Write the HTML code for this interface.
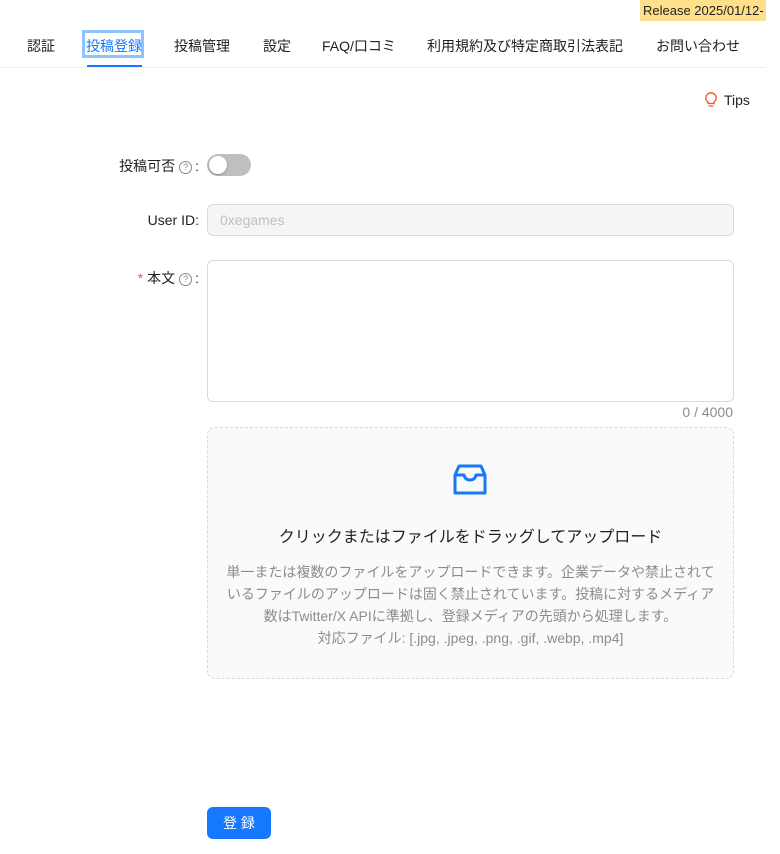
<!DOCTYPE html>
<html><head><meta charset="utf-8"><style>
body{margin:0;width:780px;height:854px;background:#fff;font-family:"Liberation Sans","Noto Sans CJK JP",sans-serif;color:#1f1f1f;position:relative;overflow:hidden}
.a{position:absolute;white-space:nowrap}
.tab{position:absolute;top:36px;font-size:14px;color:#1f1f1f}
.q{display:inline-block;width:11px;height:11px;border:1px solid #888;border-radius:50%;font-size:9px;line-height:11px;text-align:center;color:#888;vertical-align:1px;margin:0 3px 0 4px}
.lbl{font-size:14px;color:#1f1f1f;text-align:right;right:581px}
</style></head><body>
<div class="a" style="left:640px;top:0;width:126px;height:21px;background:#ffe08a;font-size:13px;line-height:21px;padding-left:3px;box-sizing:border-box;overflow:hidden">Release 2025/01/12-</div>
<div class="tab" style="left:27px">認証</div>
<div class="a" style="left:82px;top:30px;width:62px;height:28px;border:3px solid #8cc4ff;box-sizing:border-box"></div>
<div class="tab" style="left:86px;color:#1677ff">投稿登録</div>
<div class="a" style="left:87px;top:65px;width:55px;height:3px;background:#1677ff"></div>
<div class="tab" style="left:174px">投稿管理</div>
<div class="tab" style="left:263px">設定</div>
<div class="tab" style="left:322px">FAQ/口コミ</div>
<div class="tab" style="left:427px">利用規約及び特定商取引法表記</div>
<div class="tab" style="left:656px">お問い合わせ</div>
<div class="a" style="left:0;top:67px;width:766px;height:1px;background:#eee"></div>

<div class="a" style="left:704px;top:92px;font-size:14px">
<svg width="14" height="16" viewBox="0 0 14 16" style="vertical-align:-3px;margin-right:6px"><path d="M4 11.5V10C2.6 9 1.8 7.6 1.8 6a5.2 5.2 0 0 1 10.4 0c0 1.6-.8 3-2.2 4v1.5z M4.5 14h5" fill="none" stroke="#fa541c" stroke-width="1.3"/></svg>Tips</div>

<div class="a lbl" style="top:156px">投稿可否<span class="q">?</span>:</div>
<div class="a" style="left:207px;top:154px;width:44px;height:22px;border-radius:11px;background:#bfbfbf"></div>
<div class="a" style="left:209px;top:156px;width:18px;height:18px;border-radius:50%;background:#fff;box-shadow:0 1px 2px rgba(0,0,0,.3)"></div>

<div class="a lbl" style="top:212px">User ID:</div>
<div class="a" style="left:207px;top:204px;width:527px;height:32px;box-sizing:border-box;border:1px solid #d9d9d9;border-radius:6px;background:#f5f5f5;font-size:14px;color:#bfbfbf;line-height:30px;padding-left:12px">0xegames</div>

<div class="a lbl" style="top:268px"><span style="color:#ff4d4f;margin-right:4px">*</span>本文<span class="q">?</span>:</div>
<div class="a" style="left:207px;top:260px;width:527px;height:142px;box-sizing:border-box;border:1px solid #d9d9d9;border-radius:6px"></div>
<div class="a" style="right:47px;top:404px;font-size:14px;color:#8c8c8c">0 / 4000</div>

<div class="a" style="left:207px;top:427px;width:527px;height:252px;box-sizing:border-box;border:1px dashed #d9d9d9;border-radius:8px;background:#fafafa"></div>
<svg class="a" style="left:452px;top:462px" width="36" height="36" viewBox="0 0 36 36"><path d="M7 4h22l4 9v18H3V13z M3 13h9c1 4 3 5 6 5s5-1 6-5h9" fill="none" stroke="#1677ff" stroke-width="3" stroke-linejoin="round"/></svg>
<div class="a" style="left:207px;width:527px;top:523px;text-align:center;font-size:16px">クリックまたはファイルをドラッグしてアップロード</div>
<div class="a" style="left:222px;width:497px;top:561px;text-align:center;font-size:14px;line-height:22px;color:#8c8c8c;white-space:normal">単一または複数のファイルをアップロードできます。企業データや禁止されているファイルのアップロードは固く禁止されています。投稿に対するメディア数はTwitter/X APIに準拠し、登録メディアの先頭から処理します。<br>対応ファイル: [.jpg, .jpeg, .png, .gif, .webp, .mp4]</div>

<div class="a" style="left:207px;top:807px;width:64px;height:32px;border-radius:6px;background:#1677ff;color:#fff;font-size:14px;line-height:32px;text-align:center">登 録</div>
</body></html>
